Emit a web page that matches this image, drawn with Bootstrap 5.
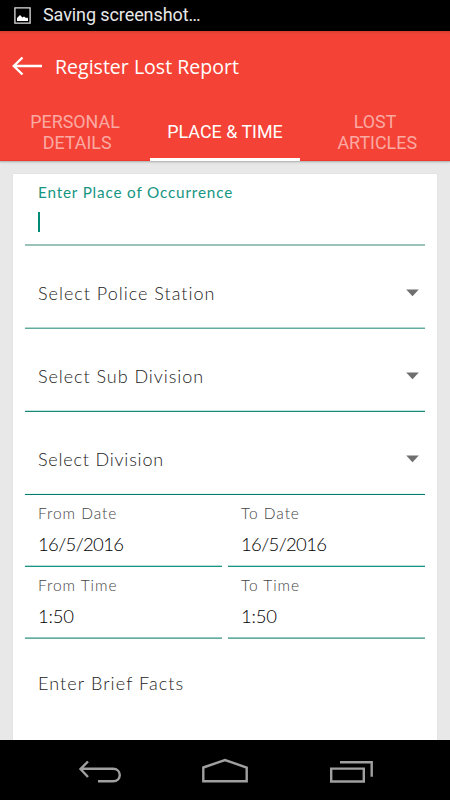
<!DOCTYPE html>
<html lang="en">
<head>
<meta charset="utf-8">
<meta name="viewport" content="width=device-width, initial-scale=1">
<title>Register Lost Report</title>
<link href="https://cdn.jsdelivr.net/npm/bootstrap@5.3.0/dist/css/bootstrap.min.css" rel="stylesheet">
<style>
body{width:450px;height:800px;overflow:hidden;background:#e8e8e8;font-family:Lato,sans-serif;line-height:1}
svg{display:block;flex:none}
.status{height:31px;font:400 18px/30px Roboto,sans-serif;color:#e8e8e8;padding-left:14px;background:#000}
.status span{margin-left:12px;letter-spacing:-.09px;margin-top:-2px}
.appbar{height:130px;color:#fff;background:linear-gradient(#d93c30 0,#f04236 3px,#f44336 7px);border-bottom:1px solid #ee3a2c;box-shadow:0 1px 1px #bbb,0 2px 2px #d4d4d4}
.topbar{height:70px;padding-left:12px}
.topbar h1{font:400 19.5px/30px "Open Sans",sans-serif;margin:1px 0 0 12px;letter-spacing:.02px}
.tabs{height:60px;margin-bottom:-1px}
.tab{width:150px;font:400 17.9px/20.5px Roboto,sans-serif;color:#fba9a3;text-align:center;border-bottom:3px solid transparent;padding-top:6px}
.tab.current{color:#fff;border-bottom-color:#fff}
.sheet{width:424px;height:566px;margin:13px 0 0 13px;padding:0 12px;background:#fff;box-shadow:0 0 1px #ccc}
.field{border-bottom:1px solid;position:relative;padding:0 13px}
.field::after{content:"";position:absolute;left:0;right:0;bottom:0;height:1px;background:var(--soft)}
.cap{font-weight:300;font-size:15.5px;line-height:18px;letter-spacing:.95px;color:#444}
.hint{font-weight:300;font-size:18px;line-height:22px;letter-spacing:1px;color:#222}
.sub{letter-spacing:.95px}
.div{letter-spacing:.8px}
.brief{letter-spacing:1.1px}
.val{font-weight:300;font-size:18.5px;line-height:22px;color:#000;letter-spacing:-.65px}
.place{height:72px;padding-top:9px;border-color:#9ac2b9;--soft:#9ac2b9}
.place .cap{color:#159582;font-weight:400;font-size:15.3px;letter-spacing:.82px}
.caret{width:2px;height:20px;background:#008b79;margin-top:11px}
.pick{height:83px;padding:11px 6px 0 13px}
.f1{border-color:#5fab9d;--soft:#b3d8d0}
.f2{border-color:#188b7a;--soft:#c4e3dc}
.f3{border-color:#007f6e;--soft:#edf7f5}
.half{width:197px;height:72px;padding-top:9px}
.half .val{margin-top:11px}
.date{border-color:#1d9483;--soft:#b3ddd6}
.time{border-color:#67aca1;--soft:#92c7be}
.time .val{letter-spacing:-.2px}
.facts{padding:33px 13px 0}
.navbtns{height:60px;background:#000}
</style>
<script src="https://cdn.jsdelivr.net/npm/bootstrap@5.3.0/dist/js/bootstrap.bundle.min.js"></script>
</head>
<body class="d-flex flex-column">
<div class="status d-flex align-items-center">
<svg width="17" height="17" viewBox="0 0 17 17"><path d="M.9.9h15.200v15.200H.9z" fill="none" stroke="#e0e0e0" stroke-width="1.300"/><path d="M3 14v-3l3-3 2.500 2.500 1.500-1 2 1.500 1.200-.5.800 1V14z" fill="#fff"/></svg>
<span>Saving screenshot…</span>
</div>
<header class="appbar">
<div class="topbar d-flex align-items-center">
<svg width="31" height="20" viewBox="0 0 31 20"><path d="M30 10H2M10.500 1.500L1.800 10l8.700 8.500" fill="none" stroke="#fff" stroke-width="2.400"/></svg>
<h1>Register Lost Report</h1>
</div>
<nav class="tabs d-flex">
<div class="tab d-flex align-items-center justify-content-center"><span>PERSONAL<br>&nbsp;DETAILS</span></div>
<div class="tab current d-flex align-items-center justify-content-center"><span>PLACE &amp; TIME</span></div>
<div class="tab d-flex align-items-center justify-content-center"><span>LOST<br>&nbsp;ARTICLES</span></div>
</nav>
</header>
<main class="sheet">
<div class="field place"><div class="cap">Enter Place of Occurrence</div><div class="caret"></div></div>
<div class="field pick f1 d-flex align-items-center justify-content-between"><span class="hint">Select Police Station</span><svg width="13" height="8" viewBox="0 0 13 8"><path d="M.2.500h12.600L6.500 7.200z" fill="#6f6f6f"/></svg></div>
<div class="field pick f2 d-flex align-items-center justify-content-between"><span class="hint sub">Select Sub Division</span><svg width="13" height="8" viewBox="0 0 13 8"><path d="M.2.500h12.600L6.500 7.200z" fill="#6f6f6f"/></svg></div>
<div class="field pick f3 d-flex align-items-center justify-content-between"><span class="hint div">Select Division</span><svg width="13" height="8" viewBox="0 0 13 8"><path d="M.2.500h12.600L6.500 7.200z" fill="#6f6f6f"/></svg></div>
<div class="d-flex justify-content-between">
<div class="field half date"><div class="cap">From Date</div><div class="val">16/5/2016</div></div>
<div class="field half date"><div class="cap">To Date</div><div class="val">16/5/2016</div></div>
</div>
<div class="d-flex justify-content-between">
<div class="field half time"><div class="cap">From Time</div><div class="val">1:50</div></div>
<div class="field half time"><div class="cap">To Time</div><div class="val">1:50</div></div>
</div>
<div class="facts"><div class="hint brief">Enter Brief Facts</div></div>
</main>
<footer class="navbtns">
<svg width="450" height="60" viewBox="0 0 450 60" fill="none" stroke="#a0a0a0" stroke-width="2.400"><path d="M88 21.500L80.500 29l7.500 8M81 28.800h32c9 0 9 12.500 0 12.500H98"/><path d="M203.300 27.500L225 20l21.700 7.500v13.800h-43.400z"/><path d="M331.200 28.600h32.600v12.900h-32.600zM340 22.300h31.700v14.500"/></svg>
</footer>
</body>
</html>
